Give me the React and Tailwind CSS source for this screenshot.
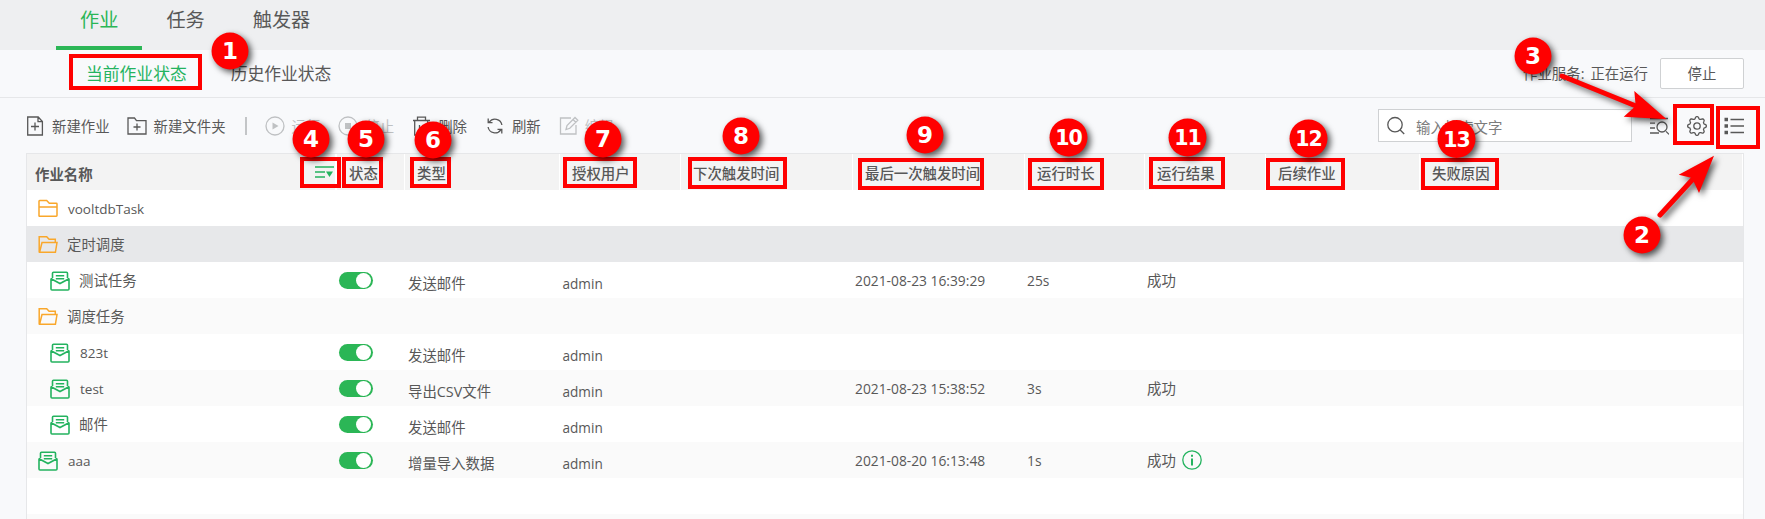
import React from "react";

const columns = [
  { title: "状态", width: "w-[68px]" },
  { title: "类型", width: "w-[155px]" },
  { title: "授权用户", width: "w-[121px]" },
  { title: "下次触发时间", width: "w-[172px]" },
  { title: "最后一次触发时间", width: "w-[172px]" },
  { title: "运行时长", width: "w-[120px]" },
  { title: "运行结果", width: "w-[121px]" },
  { title: "后续作业", width: "w-[154px]" },
  { title: "失败原因", width: "flex-1" },
];

const rows = [
  { name: "vooltdbTask", icon: "folder" },
  { name: "定时调度", icon: "open", selected: true },
  { name: "测试任务", icon: "job", child: true, type: "发送邮件", last: "2021-08-23 16:39:29", duration: "25s", result: "成功" },
  { name: "调度任务", icon: "open" },
  { name: "823t", icon: "job", child: true, type: "发送邮件" },
  { name: "test", icon: "job", child: true, type: "导出CSV文件", last: "2021-08-23 15:38:52", duration: "3s", result: "成功" },
  { name: "邮件", icon: "job", child: true, type: "发送邮件" },
  { name: "aaa", icon: "job", type: "增量导入数据", last: "2021-08-20 16:13:48", duration: "1s", result: "成功", info: true },
  {},
  {},
];

// Numbered callouts: centre of the badge
const badges = [
  [1, 230, 51], [2, 1642, 235], [3, 1533, 56], [4, 311, 139], [5, 366, 139],
  [6, 433, 140], [7, 603, 139], [8, 741, 136], [9, 925, 135], [10, 1068.5, 137.5],
  [11, 1187.5, 137.5], [12, 1308.5, 138.5], [13, 1456.5, 139],
];

// Callout frames: left, top, right, bottom
const frames = [
  [69, 54, 202, 90], [1716, 106, 1760, 149], [1673, 104, 1714, 145],
  [300, 157, 341, 188], [342, 157, 383, 188], [410, 157, 451, 188],
  [563, 157, 637, 188], [688, 157, 787, 189], [858, 158, 984, 190],
  [1028, 158, 1104, 190], [1149, 157, 1225, 189], [1266, 158, 1345, 190],
  [1421, 158, 1499, 190],
];

// Outline of an eight-toothed gear centred at 10,10
const gearPoints = Array.from({ length: 96 }, (_, i) => {
  const a = (i / 96) * Math.PI * 2;
  const wave = Math.max(-0.75, Math.min(0.75, Math.cos(a * 8) * 1.1));
  const r = 8.3 + wave * 1.35;
  return `${(10 + r * Math.cos(a)).toFixed(2)},${(10 + r * Math.sin(a)).toFixed(2)}`;
}).join(" ");

function Icon({ children, className = "", width = 1.3 }) {
  return (
    <svg viewBox="0 0 20 20" className={`w-5 h-5 shrink-0 ${className}`} fill="none" stroke="currentColor" strokeWidth={width}>
      {children}
    </svg>
  );
}

function RowIcon({ type }) {
  if (type === "folder") {
    return (
      <Icon className="mt-px text-[#f9a72b]" width={1.5}>
        <path d="M1 17.3V2.2q0-.7.7-.7h7l2.6 2.7h7q.7 0 .7.7v11.7q0 .7-.7.7H1.7q-.7 0-.7-.7M1 8h18" />
      </Icon>
    );
  }
  if (type === "open") {
    return (
      <Icon className="mt-px text-[#f9a72b]" width={1.5}>
        <path d="M1.2 17.3V1.7h7.5l2.4 2.6h6.2v3.2M1.6 17.3 4 7.5h15l-1.6 9.8H1.6Z" />
      </Icon>
    );
  }
  return (
    <Icon className="mt-px text-[#24b35f]" width={1.6}>
      <path d="M2.5 7V2.2q0-1 1-1h13q1 0 1 1V7M2.5 7.500H1.700q-.7 0-.7.8v9.700q0 1 1 1h16q1 0 1-1V8.300q0-.8-.7-.8h-.8M1.500 8l8.500 4.500L18.500 8M5.800 4.700h8.400M5.800 7.800h8.400" />
    </Icon>
  );
}

function Toggle() {
  return (
    <div className="flex items-center justify-end w-[34px] h-[17px] pr-0.5 rounded-full bg-[#2bb656]">
      <div className="w-[15px] h-[15px] rounded-full bg-white" />
    </div>
  );
}

function TableRow({ row, index }) {
  const bg = row.selected ? "bg-[#e7e8ea]" : index % 2 ? "bg-[#fafafa]" : "bg-white";
  const latinName = /^\w+$/.test(row.name || "");
  return (
    <div className={`flex items-center h-9 shrink-0 ${bg}`}>
      <div className={`flex items-center w-[312px] gap-[9px] ${row.child ? "pl-[23px]" : "pl-[11px]"}`}>
        {row.icon && <RowIcon type={row.icon} />}
        <span className={latinName ? "pt-0.5 pl-px text-[13.5px]" : "pt-0.5"}>{row.name}</span>
      </div>
      {row.type && (
        <>
          <div className="w-[69px]"><Toggle /></div>
          <div className="w-[154.5px] pt-2">{row.type}</div>
          <div className="w-[292.5px] pt-2 text-[13.6px]">admin</div>
          <div className="w-[172px] pt-0.5 text-[13.8px]">{row.last}</div>
          <div className="w-[120px] pt-0.5 text-[13.8px]">{row.duration}</div>
          <div className="flex items-center gap-1.5">
            <span className="pt-0.5">{row.result}</span>
            {row.info && (
              <Icon className="text-[#24b35f]">
                <circle cx="10" cy="10" r="9.2" />
                <path d="M10 8.5v7M10 4.8v2" strokeWidth="2" />
              </Icon>
            )}
          </div>
        </>
      )}
    </div>
  );
}

function Toolbar() {
  return (
    <div className="flex items-center h-[55px] pl-[25px] pr-[21px]">
      <Icon>
        <path d="M2.7 1h10.5l4.2 4.5V19H2.7zM13 1v4.7h4.4M10 6.5v8M6 10.5h8" />
      </Icon>
      <span className="ml-[7px] pt-0.5">新建作业</span>
      <Icon className="ml-[17px]">
        <path d="M1 18V2h6.5l2 2.6H19V18zM10 7.5v7M6.5 11h7" />
      </Icon>
      <span className="ml-[7px] pt-0.5">新建文件夹</span>
      <div className="ml-[19px] w-0.5 h-[18px] bg-[#c3c5c7]" />
      <div className="flex items-center ml-[18px] text-[#bfc1c3]">
        <Icon>
          <circle cx="10" cy="10" r="9" />
          <path d="M7.5 6.5v7l6-3.5z" fill="currentColor" stroke="none" />
        </Icon>
        <span className="ml-[7px] pt-0.5">运行</span>
        <Icon className="ml-[18px]">
          <circle cx="10" cy="10" r="9" />
          <path d="M7 7h6v6H7z" fill="currentColor" stroke="none" />
        </Icon>
        <span className="ml-[7px] pt-0.5">停止</span>
      </div>
      <Icon className="ml-[17px]">
        <path d="M2 4.5h17M6.500 4V1.200h8V4M3.700 4.500V19h13V4.500M8.500 9v6M12 9v6" />
      </Icon>
      <span className="ml-[7px] pt-0.5">删除</span>
      <Icon className="ml-[18px]">
        <path d="M4.2 6.2A7 7 0 0 1 16.9 9M3.1 11A7 7 0 0 0 15.8 13.8M3.2 2.5v4.2h4.3M16.8 17.5v-4.200h-4.300" />
      </Icon>
      <span className="ml-[7px] pt-0.5">刷新</span>
      <div className="flex items-center ml-[18px] text-[#bfc1c3]">
        <Icon>
          <path d="M12 2H1.5v16H17V9M7 13.500l1-4 8-8 2.800 2.800-8 8zM14 3.500l2.800 2.800" />
        </Icon>
        <span className="ml-[6px] pt-0.5">编辑</span>
      </div>
      <div className="flex items-center ml-auto w-[254px] h-[33px] pl-2 border border-[#cfd1d3] bg-white">
        <Icon>
          <circle cx="8" cy="8.7" r="7.2" />
          <path d="m13.2 14 4 4" />
        </Icon>
        <span className="ml-[9px] pt-[5px] text-[#7c7c7c]">输入搜索文字</span>
      </div>
      <Icon className="ml-[17px]">
        <path d="M1 2.5h18M1 7.2h5M1 12h5M1 17h9M17 15.4l3 3" />
        <circle cx="13" cy="11" r="5" />
      </Icon>
      <Icon className="ml-[18px]">
        <polygon points={gearPoints} strokeLinejoin="round" />
        <circle cx="10" cy="10" r="3.2" />
      </Icon>
      <Icon className="ml-[17px]">
        <path d="M6.5 3.5H20M6.5 10H20M6.5 16.5H20" />
        <path d="M.5 3.5h3.5M.5 10h3.5M.5 16.5h3.5" strokeWidth="3.5" />
      </Icon>
    </div>
  );
}

function Annotations() {
  return (
    <svg viewBox="0 0 1765 519" className="absolute inset-0 w-[1765px] h-[519px] pointer-events-none">
      {frames.map(([x1, y1, x2, y2]) => (
        <rect key={x1} x={x1 + 2} y={y1 + 2} width={x2 - x1 - 4} height={y2 - y1 - 4} fill="none" stroke="#f00" strokeWidth="4" />
      ))}
      {badges.map(([n, x, y]) => (
        <g key={n}>
          <circle cx={x} cy={y} r={n > 9 ? 19 : 18.5} fill="#f00" className="drop-shadow-[3px_3px_3px_rgba(0,0,0,0.65)]" />
          <text
            x={x}
            y={y + (n > 9 ? 7.5 : 8.3)}
            textAnchor="middle"
            fill="#fff"
            className={`font-['DejaVu_Sans'] font-bold ${n > 9 ? "text-[20.5px] tracking-[-1px]" : "text-[23px]"}`}
          >
            {n}
          </text>
        </g>
      ))}
      <g fill="#f00" className="drop-shadow-[3px_3px_3px_rgba(0,0,0,0.65)]">
        <path d="M1562 76 1636 106" stroke="#f00" strokeWidth="5" strokeLinecap="round" />
        <path d="m1666.7 119.3-32.4-28.3 1.4 15-12 10.7z" />
        <path d="m1660 215 33-36" stroke="#f00" strokeWidth="5" strokeLinecap="round" />
        <path d="m1714 155.7-35.3 19 13.3 3.3 7 15z" />
      </g>
    </svg>
  );
}

function App() {
  return (
    <div className="relative flex flex-col w-[1765px] h-[519px] overflow-hidden bg-[#f8f9fb] text-[#585858] text-[14.4px] leading-5 whitespace-nowrap font-['Open_Sans','Noto_Sans_CJK_SC',sans-serif]">
      {/* Main tabs */}
      <div className="flex shrink-0 h-[50px] pl-14 bg-[#eeeff1] text-[19.2px]">
        <div className="px-6 pt-2.5 border-b-4 border-[#2bb656] text-[#2bb656]">作业</div>
        <div className="px-6 pt-2.5">任务</div>
        <div className="px-6 pt-2.5">触发器</div>
      </div>

      {/* Sub tabs and service state */}
      <div className="flex items-center shrink-0 h-12 pl-[86px] pr-[21px] border-b border-[#e6e7e9]">
        <div className="flex gap-11 text-[16.8px]">
          <span className="text-[#24b35f]">当前作业状态</span>
          <span>历史作业状态</span>
        </div>
        <span className="ml-auto">作业服务:<span className="ml-1.5">正在运行</span></span>
        <button className="ml-3 w-[84px] h-[31px] border border-[#cfd1d3] rounded-[2px] bg-white">停止</button>
      </div>

      <Toolbar />

      {/* Job table */}
      <div className="flex flex-col flex-1 min-h-0 ml-[26px] mr-[21px] border border-b-0 border-[#e6e7e9] overflow-hidden">
        <div className="flex shrink-0 h-9 bg-[#f3f3f3]">
          <div className="flex items-center justify-between w-[310px] pl-2 pr-px border-r-2 border-white">
            <span className="pt-[5px] font-bold">作业名称</span>
            <svg viewBox="0 0 19 12" className="w-[19px] h-3 text-[#24b35f]" fill="none" stroke="currentColor" strokeWidth="1.3">
              <path d="M0 1h19M0 6h10M0 11h10" />
              <path d="M11 5.5h7l-3.5 5.5z" fill="currentColor" stroke="none" />
            </svg>
          </div>
          {columns.map((col) => (
            <div key={col.title} className={`flex items-center pl-3 pt-[3px] border-r border-white font-medium ${col.width}`}>
              {col.title}
            </div>
          ))}
        </div>
        {rows.map((row, i) => (
          <TableRow key={i} row={row} index={i} />
        ))}
      </div>

      <Annotations />
    </div>
  );
}

export default App;
